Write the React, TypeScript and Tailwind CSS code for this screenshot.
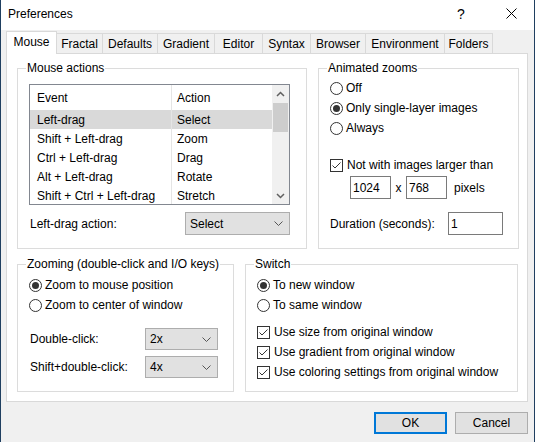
import type { ReactNode } from "react";

const tabs = [
  { name: "Mouse", w: "w-[51px]" },
  { name: "Fractal", w: "w-[46px]" },
  { name: "Defaults", w: "w-[55px]" },
  { name: "Gradient", w: "w-[57px]" },
  { name: "Editor", w: "w-[48px]" },
  { name: "Syntax", w: "w-[48px]" },
  { name: "Browser", w: "w-[55px]" },
  { name: "Environment", w: "w-[79px]" },
  { name: "Folders", w: "w-[48px]" },
];

const mouseRows = [
  ["Left-drag", "Select"],
  ["Shift + Left-drag", "Zoom"],
  ["Ctrl + Left-drag", "Drag"],
  ["Alt + Left-drag", "Rotate"],
  ["Shift + Ctrl + Left-drag", "Stretch"],
];

const Group = ({
  label,
  className,
  children,
}: {
  label: string;
  className: string;
  children: ReactNode;
}) => (
  <div className={`relative border border-[#dcdcdc] ${className}`}>
    <span className="absolute -top-[9px] left-[8px] bg-white px-px leading-[16px]">
      {label}
    </span>
    {children}
  </div>
);

const Radio = ({ checked, label }: { checked?: boolean; label: string }) => (
  <div className="flex h-5 items-center gap-[3px]">
    <span className="flex h-[13px] w-[13px] items-center justify-center rounded-full border border-[#333] bg-white">
      {checked && <span className="h-[7px] w-[7px] rounded-full bg-[#333]" />}
    </span>
    <span>{label}</span>
  </div>
);

const Check = ({ label }: { label: string }) => (
  <div className="flex h-5 items-center gap-[4px]">
    <span className="flex h-[13px] w-[13px] items-center justify-center border border-[#333] bg-white">
      <svg width="11" height="11" viewBox="0 0 11 11">
        <polyline
          points="1.5,5.5 4,8 9.5,2.5"
          fill="none"
          stroke="#333"
          strokeWidth="1"
        />
      </svg>
    </span>
    <span>{label}</span>
  </div>
);

const Chevron = () => (
  <svg width="9" height="5" viewBox="0 0 9 5">
    <polyline points="0.5,0.5 4.5,4.5 8.5,0.5" fill="none" stroke="#555" />
  </svg>
);

const Combo = ({ value, className }: { value: string; className: string }) => (
  <div
    className={`flex items-center justify-between border border-[#adadad] bg-[#e1e1e1] pl-[4px] pr-[6px] ${className}`}
  >
    <span>{value}</span>
    <Chevron />
  </div>
);

const TextBox = ({ value, className }: { value: string; className: string }) => (
  <div className={`flex items-center border border-[#7a7a7a] bg-white pl-[2px] ${className}`}>
    {value}
  </div>
);

const ListBox = () => (
  <div className="flex h-[121px] w-[261px] overflow-hidden border border-[#828790] bg-white">
    <div className="flex flex-1 flex-col">
      <div className="flex h-[25px] shrink-0 items-center">
        <div className="w-[141px] pl-[7px]">Event</div>
        <div className="flex h-full flex-1 items-center border-l border-[#e5e5e5] pl-[5px]">
          Action
        </div>
      </div>
      {mouseRows.map(([ev, act], i) => (
        <div
          key={ev}
          className={`flex h-[19px] shrink-0 items-center ${i === 0 ? "bg-[#d9d9d9]" : ""}`}
        >
          <div className="w-[141px] pl-[7px]">{ev}</div>
          <div className="flex h-full flex-1 items-center border-l border-[#e5e5e5] pl-[5px]">
            {act}
          </div>
        </div>
      ))}
    </div>
    <div className="flex w-[17px] flex-col bg-[#f0f0f0]">
      <div className="flex h-[17px] items-center justify-center">
        <svg width="9" height="6" viewBox="0 0 9 6">
          <polyline points="1,5 4.5,1.5 8,5" fill="none" stroke="#606060" strokeWidth="1.5" />
        </svg>
      </div>
      <div className="mx-px mt-px h-[29px] bg-[#cdcdcd]" />
      <div className="flex-1" />
      <div className="flex h-[17px] items-center justify-center">
        <svg width="9" height="6" viewBox="0 0 9 6">
          <polyline points="1,1 4.5,4.5 8,1" fill="none" stroke="#606060" strokeWidth="1.5" />
        </svg>
      </div>
    </div>
  </div>
);

export default function App() {
  return (
    <div className="flex h-[442px] w-[535px] flex-col border-x border-[#1f3f60] bg-[#f0f0f0] font-['Segoe_UI','Liberation_Sans',sans-serif] text-[12px] leading-[16px] text-black">
      {/* title bar */}
      <div className="flex h-[30px] shrink-0 items-center bg-white pb-[3px]">
        <span className="flex-1 pl-[7px]">Preferences</span>
        <span className="w-[46px] pr-[8px] text-center text-[14px]">?</span>
        <span className="flex w-[46px] justify-center">
          <svg width="11" height="11" viewBox="0 0 11 11">
            <path d="M0.5 0.5 L10.5 10.5 M10.5 0.5 L0.5 10.5" stroke="#000" strokeWidth="1" />
          </svg>
        </span>
      </div>

      {/* tabs */}
      <div className="mt-px flex h-[22px] shrink-0 items-end pl-[5px]">
        {tabs.map((t, i) =>
          i === 0 ? (
            <div
              key={t.name}
              className={`relative z-10 -mb-px flex h-[23px] items-center justify-center border-x border-t border-[#d9d9d9] bg-white pb-[2px] ${t.w}`}
            >
              {t.name}
            </div>
          ) : (
            <div
              key={t.name}
              className={`flex h-[20px] items-center justify-center border-r border-t border-[#d9d9d9] bg-[#f0f0f0] ${t.w}`}
            >
              {t.name}
            </div>
          )
        )}
      </div>

      {/* panel */}
      <div className="ml-[5px] flex h-[349px] w-[522px] shrink-0 flex-col gap-[15px] border border-[#d9d9d9] bg-white pl-[10px] pt-[14px]">
        <div className="flex gap-[11px]">
          <Group label="Mouse actions" className="h-[181px] w-[290px] pl-[11px] pt-[15px]">
            <ListBox />
            <div className="mt-[7px] flex w-[261px] items-center justify-between">
              <span className="pl-px">Left-drag action:</span>
              <Combo value="Select" className="h-[23px] w-[105px]" />
            </div>
          </Group>

          <Group label="Animated zooms" className="h-[181px] w-[201px] pl-[11px] pt-[9px]">
            <Radio label="Off" />
            <Radio checked label="Only single-layer images" />
            <Radio label="Always" />
            <div className="mt-[17px]">
              <Check label="Not with images larger than" />
            </div>
            <div className="mt-px flex h-[23px] items-center pl-[20px]">
              <TextBox value="1024" className="h-[23px] w-[41px]" />
              <span className="w-[15px] text-center">x</span>
              <TextBox value="768" className="h-[23px] w-[41px]" />
              <span className="ml-[7px]">pixels</span>
            </div>
            <div className="mt-[13px] flex h-[23px] items-center">
              <span className="w-[118px]">Duration (seconds):</span>
              <TextBox value="1" className="h-[23px] w-[55px]" />
            </div>
          </Group>
        </div>

        <div className="flex gap-[11px]">
          <Group
            label="Zooming (double-click and I/O keys)"
            className="h-[128px] w-[217px] pl-[11px] pt-[10px]"
          >
            <Radio checked label="Zoom to mouse position" />
            <Radio label="Zoom to center of window" />
            <div className="mt-[13px] flex h-[22px] items-center">
              <span className="w-[116px] pl-px">Double-click:</span>
              <Combo value="2x" className="h-[22px] w-[73px]" />
            </div>
            <div className="mt-[6px] flex h-[22px] items-center">
              <span className="w-[116px] pl-px">Shift+double-click:</span>
              <Combo value="4x" className="h-[22px] w-[73px]" />
            </div>
          </Group>

          <Group label="Switch" className="h-[128px] w-[273px] pl-[11px] pt-[10px]">
            <Radio checked label="To new window" />
            <Radio label="To same window" />
            <div className="mt-[7px]">
              <Check label="Use size from original window" />
              <Check label="Use gradient from original window" />
              <Check label="Use coloring settings from original window" />
            </div>
          </Group>
        </div>
      </div>

      {/* buttons */}
      <div className="mt-[10px] flex justify-end gap-[8px] pr-[6px]">
        <button className="h-[22px] w-[73px] border-2 border-[#0078d7] bg-[#e1e1e1]">OK</button>
        <button className="h-[22px] w-[73px] border border-[#adadad] bg-[#e1e1e1]">
          Cancel
        </button>
      </div>
    </div>
  );
}
